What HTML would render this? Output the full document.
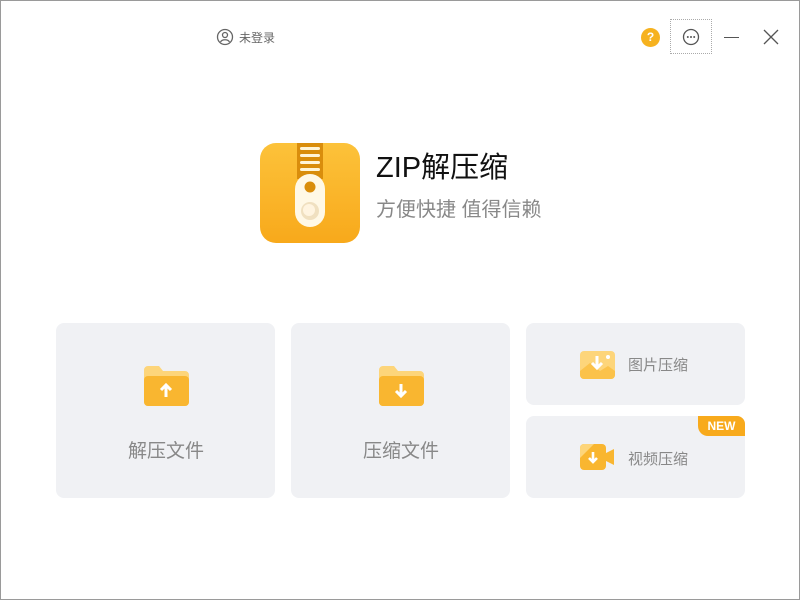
<!DOCTYPE html>
<html><head><meta charset="utf-8"><style>
*{margin:0;padding:0;box-sizing:border-box}
body{width:800px;height:600px;background:#fff;font-family:"Liberation Sans","Noto Sans CJK SC",sans-serif;position:relative;overflow:hidden}
.frame{position:absolute;left:0;top:0;width:800px;height:600px;border:1px solid #9a9a9a}
.card{position:absolute;background:#f0f1f4;border-radius:8px}
.lbl{position:absolute;color:#888;font-size:19px}
.sl{position:absolute;color:#888;font-size:15px}
</style></head><body>
<div class="frame"></div>
<svg style="position:absolute;left:216px;top:28px" width="18" height="18" viewBox="0 0 18 18"><circle cx="9" cy="9" r="7.5" fill="none" stroke="#666" stroke-width="1.3"/><circle cx="9" cy="7" r="2.5" fill="none" stroke="#666" stroke-width="1.3"/><path d="M4.5 14c1.5-3 7.5-3 9 0" fill="none" stroke="#666" stroke-width="1.3"/></svg>
<div style="position:absolute;left:239px;top:29px;font-size:12px;color:#666">未登录</div>
<div style="position:absolute;left:641px;top:28px;width:19px;height:19px;border-radius:50%;background:#f6b21f;color:#fff;font-size:12px;font-weight:bold;text-align:center;line-height:19px">?</div>
<div style="position:absolute;left:670px;top:19px;width:42px;height:35px;border:1px dotted #aaa"></div>
<svg style="position:absolute;left:682px;top:28px" width="18" height="18" viewBox="0 0 18 18"><circle cx="9" cy="9" r="7.5" fill="none" stroke="#555" stroke-width="1.3"/><circle cx="5.8" cy="9" r="1" fill="#555"/><circle cx="9" cy="9" r="1" fill="#555"/><circle cx="12.2" cy="9" r="1" fill="#555"/></svg>
<div style="position:absolute;left:724px;top:37px;width:15px;height:1px;background:#555"></div>
<svg style="position:absolute;left:763px;top:29px" width="16" height="16" viewBox="0 0 16 16"><path d="M1 1L15 15M15 1L1 15" stroke="#555" stroke-width="1.3"/></svg>

<svg style="position:absolute;left:260px;top:143px" width="100" height="100" viewBox="0 0 100 100">
<defs><linearGradient id="g" x1="0" y1="0" x2="0" y2="1"><stop offset="0" stop-color="#fcc23a"/><stop offset="1" stop-color="#f8a91b"/></linearGradient></defs>
<rect width="100" height="100" rx="16" fill="url(#g)"/>
<rect x="37" y="0" width="26" height="36" fill="#d98d0c"/>
<rect x="40" y="4" width="20" height="3" rx="1.5" fill="#fff5d8"/>
<rect x="40" y="11" width="20" height="3" rx="1.5" fill="#fff5d8"/>
<rect x="40" y="18" width="20" height="3" rx="1.5" fill="#fff5d8"/>
<rect x="40" y="25" width="20" height="3" rx="1.5" fill="#fff5d8"/>
<rect x="35" y="31" width="30" height="53" rx="15" fill="#fff8e6"/>
<circle cx="50" cy="44" r="5.5" fill="#d98d0c"/>
<circle cx="50" cy="68" r="9" fill="#f0e0c0"/><circle cx="49" cy="67" r="6" fill="#fff4e0"/>
</svg>
<div style="position:absolute;left:376px;top:144px;font-size:29px;color:#111">ZIP解压缩</div>
<div style="position:absolute;left:376px;top:193px;font-size:20px;color:#888">方便快捷 值得信赖</div>

<div class="card" style="left:56px;top:323px;width:219px;height:175px"></div>
<div class="card" style="left:291px;top:323px;width:219px;height:175px"></div>
<div class="card" style="left:526px;top:323px;width:219px;height:82px"></div>
<div class="card" style="left:526px;top:416px;width:219px;height:82px"></div>

<svg style="position:absolute;left:144px;top:366px" width="45" height="40" viewBox="0 0 45 40"><path d="M0 4a4 4 0 0 1 4-4h11l4 5h22a4 4 0 0 1 4 4v27a4 4 0 0 1-4 4H4a4 4 0 0 1-4-4z" fill="#fdd57a"/><rect x="0" y="10" width="45" height="30" rx="4" fill="#f9b630"/><path d="M22 31V20M17 24l5-5 5 5" stroke="#fff" stroke-width="3" fill="none"/></svg>
<div class="lbl" style="left:128px;top:436px">解压文件</div>
<svg style="position:absolute;left:379px;top:366px" width="45" height="40" viewBox="0 0 45 40"><path d="M0 4a4 4 0 0 1 4-4h11l4 5h22a4 4 0 0 1 4 4v27a4 4 0 0 1-4 4H4a4 4 0 0 1-4-4z" fill="#fdd57a"/><rect x="0" y="10" width="45" height="30" rx="4" fill="#f9b630"/><path d="M22 18v11M17 25l5 5 5-5" stroke="#fff" stroke-width="3" fill="none"/></svg>
<div class="lbl" style="left:363px;top:436px">压缩文件</div>

<svg style="position:absolute;left:580px;top:351px" width="35" height="28" viewBox="0 0 35 28"><rect width="35" height="28" rx="4" fill="#fdd57a"/><path d="M0 20l10-8 10 8 8-5 7 5v4a4 4 0 0 1-4 4H4a4 4 0 0 1-4-4z" fill="#fbc24a"/><circle cx="28" cy="6" r="2" fill="#fff"/><path d="M17 5v11M12 12l5 5 5-5" stroke="#fff" stroke-width="3" fill="none"/></svg>
<div class="sl" style="left:628px;top:354px">图片压缩</div>
<div style="position:absolute;left:698px;top:416px;width:47px;height:20px;background:#f8aa1c;border-radius:0 8px 0 10px;color:#fff;font-size:12px;font-weight:bold;text-align:center;line-height:20px">NEW</div>
<svg style="position:absolute;left:580px;top:444px" width="34" height="26" viewBox="0 0 34 26"><rect width="26" height="26" rx="4" fill="#f9b630"/><path d="M26 9l8-4v16l-8-4z" fill="#f9b630"/><path d="M0 4a4 4 0 0 1 4-4h10L0 14z" fill="#fdd57a"/><path d="M13 8v10M9 14l4 4 4-4" stroke="#fff" stroke-width="2.6" fill="none"/></svg>
<div class="sl" style="left:628px;top:448px">视频压缩</div>
</body></html>
